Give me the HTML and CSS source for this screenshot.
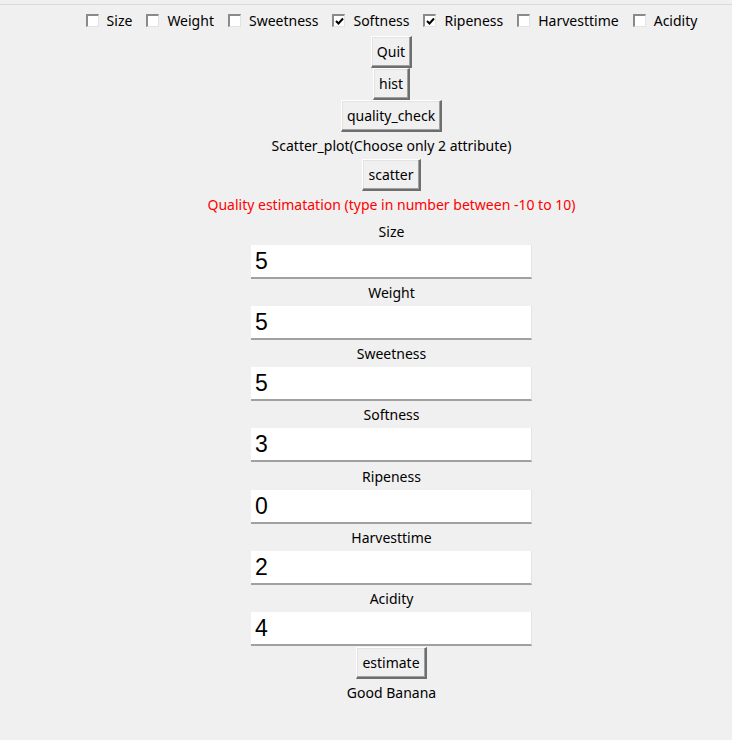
FILE: index.html
```html
<!DOCTYPE html>
<html>
<head>
<meta charset="utf-8">
<link rel="stylesheet" href="styles.css">
</head>
<body>
<div class="app">
  <div class="checks">
    <label class="check"><span class="box"></span><span>Size</span></label>
    <label class="check"><span class="box"></span><span>Weight</span></label>
    <label class="check"><span class="box"></span><span>Sweetness</span></label>
    <label class="check"><span class="box"><svg viewBox="0 0 9 9" class="tick"><polyline points="1,4 3.5,6.5 8,1.5"/></svg></span><span>Softness</span></label>
    <label class="check"><span class="box"><svg viewBox="0 0 9 9" class="tick"><polyline points="1,4 3.5,6.5 8,1.5"/></svg></span><span>Ripeness</span></label>
    <label class="check"><span class="box"></span><span>Harvesttime</span></label>
    <label class="check"><span class="box"></span><span>Acidity</span></label>
  </div>
  <div class="btn">Quit</div>
  <div class="btn">hist</div>
  <div class="btn">quality_check</div>
  <div class="label">Scatter_plot(Choose only 2 attribute)</div>
  <div class="btn">scatter</div>
  <div class="label red">Quality estimatation (type in number between -10 to 10)</div>
  <div class="label">Size</div>
  <div class="entry">5</div>
  <div class="label">Weight</div>
  <div class="entry">5</div>
  <div class="label">Sweetness</div>
  <div class="entry">5</div>
  <div class="label">Softness</div>
  <div class="entry">3</div>
  <div class="label tall">Ripeness</div>
  <div class="entry">0</div>
  <div class="label">Harvesttime</div>
  <div class="entry">2</div>
  <div class="label">Acidity</div>
  <div class="entry">4</div>
  <div class="btn btn-gap">estimate</div>
  <div class="label">Good Banana</div>
</div>
</body>
</html>
```
FILE: styles.css
```css
html, body {
  margin: 0;
  padding: 0;
  background: #f0f0f0;
  overflow: hidden;
}
body {
  width: 732px;
  height: 740px;
  font-family: "Noto Sans", "Open Sans", sans-serif;
  font-size: 14px;
  color: #000;
}
.app {
  box-sizing: border-box;
  width: 732px;
  padding-left: 51px;
  margin-top: 4px;
  border-top: 1px solid #dadada;
  display: flex;
  flex-direction: column;
  align-items: center;
}
.checks {
  display: flex;
  height: 31px;
  align-items: center;
  gap: 14px;
}
.check {
  display: flex;
  align-items: center;
  gap: 8px;
}
.box {
  width: 13px;
  height: 13px;
  box-sizing: border-box;
  background: #fff;
  border-top: 2px solid #8a8a8a;
  border-left: 2px solid #8a8a8a;
  border-right: 1px solid #e3e3e3;
  border-bottom: 1px solid #e3e3e3;
  display: flex;
  align-items: center;
  justify-content: center;
}
.tick {
  width: 9px;
  height: 9px;
}
.tick polyline {
  fill: none;
  stroke: #000;
  stroke-width: 2;
}
.btn {
  height: 32px;
  box-sizing: border-box;
  padding: 0 5px;
  display: flex;
  align-items: center;
  background: #f0f0f0;
  border-top: 1px solid #fff;
  border-left: 1px solid #fff;
  border-right: 2px solid #6e6e6e;
  border-bottom: 2px solid #6e6e6e;
  box-shadow: inset -1px -1px 0 #a0a0a0, inset 1px 1px 0 #e3e3e3;
}
.btn-gap {
  margin-top: 1px;
}
.label {
  height: 27px;
  display: flex;
  align-items: center;
}
.tall {
  height: 28px;
}
.red {
  color: #ff0000;
}
.entry {
  width: 281px;
  height: 34px;
  box-sizing: border-box;
  background: #fff;
  border-right: 1px solid #e3e3e3;
  border-bottom: 2px solid #a0a0a0;
  padding-left: 4px;
  font-family: "Liberation Sans", Arial, sans-serif;
  font-size: 23px;
  display: flex;
  align-items: center;
}
```
